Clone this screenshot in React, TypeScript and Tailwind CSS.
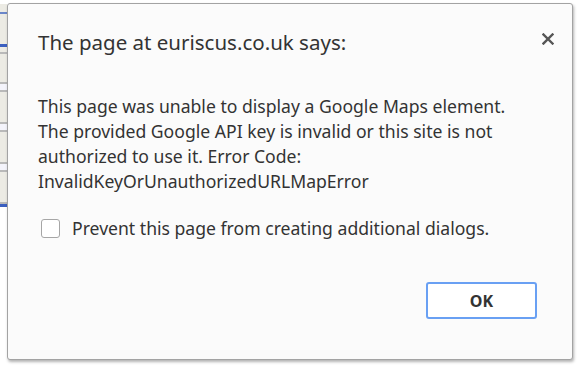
export default function App() {
  const font = { fontFamily: '"Noto Sans", "Open Sans", sans-serif' }

  return (
    <div className="flex h-[368px] w-[579px] overflow-hidden bg-white" style={font}>
      {/* strip of the page behind the dialog */}
      <div className="mt-[4px] flex w-[7px] flex-col bg-[#ecebe4]">
        <div className="mt-[8px] h-[2px] bg-[#6b86c9]" />
        <div className="mt-[30px] h-[3px] bg-[#3b5fc0]" />
        <div className="mt-[5px] h-[2px] bg-[#b9b9b9]" />
        <div className="mt-[28px] h-[2px] bg-[#b9b9b9]" />
        <div className="h-[6px] bg-[#f4f4fb]" />
        <div className="h-[2px] bg-[#b9b9b9]" />
        <div className="mt-[30px] h-[2px] bg-[#b9b9b9]" />
        <div className="h-[6px] bg-[#f4f4fb]" />
        <div className="h-[2px] bg-[#b9b9b9]" />
        <div className="mt-[30px] h-[2px] bg-[#b9b9b9]" />
        <div className="h-[6px] bg-[#f4f4fb]" />
        <div className="h-[2px] bg-[#b9b9b9]" />
        <div className="mt-[30px] h-[2px] bg-[#b9b9b9]" />
        <div className="h-[3px] bg-[#3b5fc0]" />
        <div className="flex-1 bg-white" />
      </div>

      <div className="mb-[8px] mr-[6px] mt-[3px] flex flex-1 flex-col rounded-[3px] border border-[#a3a3a3] bg-[#fbfbfb] shadow-[1px_2px_3px_rgba(0,0,0,0.3)]">
        <div className="flex items-start justify-between pl-[30px] pr-[18px] pt-[24px]">
          <h1 className="text-[20.5px] leading-[28px] text-[#333]">The page at euriscus.co.uk says:</h1>
          <svg width="12" height="12" viewBox="0 0 12 12" className="mt-[5px]">
            <path d="M1.5 1.5 L10.5 10.5 M10.5 1.5 L1.5 10.5" stroke="#555" strokeWidth="2.4" strokeLinecap="square" />
          </svg>
        </div>

        <div className="mt-[38px] pl-[30px] pr-[10px] text-[17.6px] leading-[25px] text-[#333]">
          <p>This page was unable to display a Google Maps element.</p>
          <p>The provided Google API key is invalid or this site is not</p>
          <p>authorized to use it. Error Code:</p>
          <p>InvalidKeyOrUnauthorizedURLMapError</p>
        </div>

        <label className="mt-[22px] flex items-center gap-[12px] pl-[33px] text-[17.6px] leading-[24px] text-[#333]">
          <span className="h-[19px] w-[19px] rounded-[3px] border border-[#a6a6a6] bg-white" />
          <span>Prevent this page from creating additional dialogs.</span>
        </label>

        <div className="mt-auto flex justify-end pb-[40px] pr-[35px]">
          <button
            type="button"
            className="h-[37px] w-[111px] rounded-[3px] border-2 border-[#69a0f3] bg-white text-[16px] font-bold text-[#333]"
          >
            OK
          </button>
        </div>
      </div>
    </div>
  )
}
